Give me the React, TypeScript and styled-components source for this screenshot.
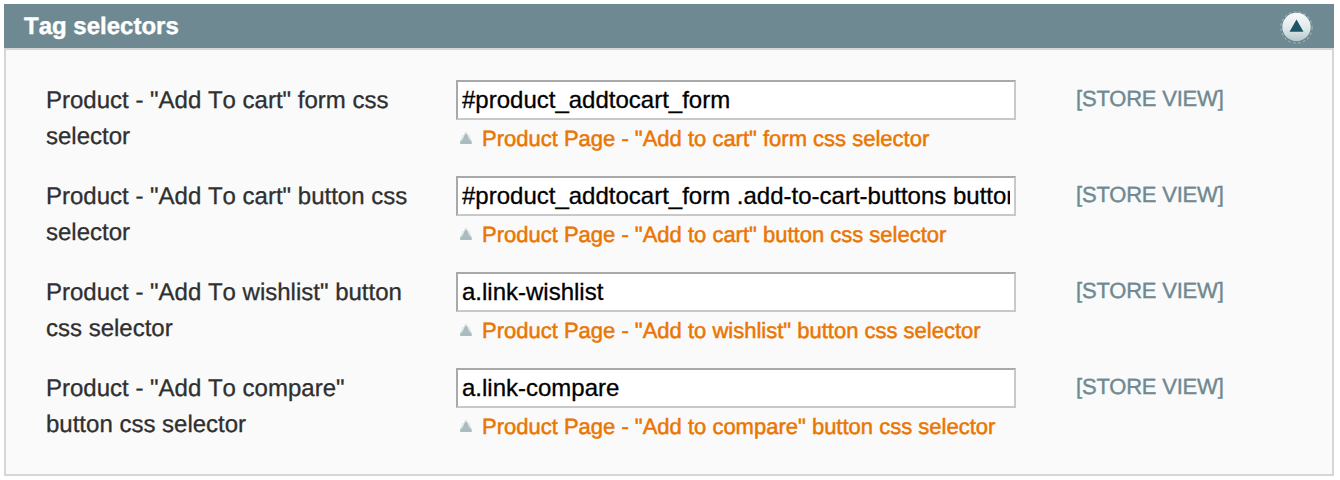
import React from "react";
import styled, { createGlobalStyle } from "styled-components";

const GlobalStyle = createGlobalStyle`
  * { box-sizing: border-box; }
  body {
    margin: 0;
    background: #fff;
    font-family: "Liberation Sans", Arial, sans-serif;
    text-rendering: geometricPrecision;
  }
`;

const Panel = styled.section`
  width: 1330px;
  margin: 4px 0 0 4px;
`;

const PanelHeader = styled.header`
  display: flex;
  align-items: center;
  justify-content: space-between;
  height: 44px;
  padding: 0 20px;
  background: #6f8992;
`;

const PanelTitle = styled.h3`
  margin: 0;
  padding-top: 2px;
  font-size: 24px;
  line-height: 42px;
  font-kerning: none;
  color: #fff;
  -webkit-text-stroke: 0.4px #fff;
`;

const ToggleIcon = styled.svg`
  display: block;
  width: 36px;
  height: 36px;
  margin-top: 2px;
`;

const PanelBody = styled.div`
  height: 428px;
  padding: 30px 40px 0;
  border: 2px solid #d6d6d6;
  background: #fafafa;
`;

const Row = styled.div`
  display: grid;
  grid-template-columns: 370px 560px 1fr;
  column-gap: 40px;
  height: 96px;
`;

const Label = styled.label`
  padding-top: 3px;
  font-size: 24px;
  line-height: 36px;
  font-kerning: none;
  color: #2f2f2f;
  -webkit-text-stroke: 0.3px #2f2f2f;
`;

const TextInput = styled.input`
  display: block;
  width: 560px;
  height: 40px;
  padding: 0 4px;
  border: 2px solid;
  border-color: #a9a9a9 #c8c8c8 #c8c8c8 #a9a9a9;
  border-radius: 0;
  outline: 0;
  background: #fff;
  color: #000;
  font: 24px "Liberation Sans", Arial, sans-serif;
  -webkit-text-stroke: 0.3px #000;
`;

const Hint = styled.p`
  display: flex;
  align-items: center;
  gap: 9px;
  margin: 0;
  padding: 4px 0 0 3px;
  font-size: 22px;
  line-height: 30px;
  white-space: nowrap;
  color: #ea7601;
  -webkit-text-stroke: 0.5px #ea7601;
`;

const HintIcon = styled.svg`
  display: block;
  flex: none;
  width: 14px;
  height: 14px;
  margin-bottom: 2px;
`;

const Scope = styled.span`
  padding: 4px 0 0 10px;
  margin-left: 10px;
  font-size: 22px;
  line-height: 30px;
  letter-spacing: -0.2px;
  white-space: nowrap;
  color: #6f8992;
  -webkit-text-stroke: 0.4px #6f8992;
`;

const fields = [
  {
    id: "cart-form",
    lines: ['Product - "Add To cart" form css', "selector"],
    value: "#product_addtocart_form",
    hint: 'Product Page - "Add to cart" form css selector',
  },
  {
    id: "cart-button",
    lines: ['Product - "Add To cart" button css', "selector"],
    value: "#product_addtocart_form .add-to-cart-buttons button",
    hint: 'Product Page - "Add to cart" button css selector',
  },
  {
    id: "wishlist-button",
    lines: ['Product - "Add To wishlist" button', "css selector"],
    value: "a.link-wishlist",
    hint: 'Product Page - "Add to wishlist" button css selector',
  },
  {
    id: "compare-button",
    lines: ['Product - "Add To compare"', "button css selector"],
    value: "a.link-compare",
    hint: 'Product Page - "Add to compare" button css selector',
  },
];

function CollapseIcon() {
  return (
    <ToggleIcon viewBox="0 0 36 36" aria-hidden="true">
      <defs>
        <linearGradient id="knob" x1="0" y1="0" x2="0" y2="1">
          <stop offset="0" stopColor="#f7fafa" />
          <stop offset="0.55" stopColor="#e0e9ea" />
          <stop offset="1" stopColor="#b4c8cb" />
        </linearGradient>
      </defs>
      <circle cx="18.5" cy="18.5" r="15.6" fill="#66828b" stroke="#93aab0" strokeWidth="1.4" strokeDasharray="3 2" />
      <circle cx="18.5" cy="18" r="14.2" fill="url(#knob)" />
      <path d="M18.5 10.5 25.5 22.8H11.5Z" fill="#1d5468" />
    </ToggleIcon>
  );
}

function HintArrow() {
  return (
    <HintIcon viewBox="0 0 14 14" aria-hidden="true">
      <path d="M5 2h1V1h2v1h1v2h2v3h1v2h1v4H1V9h1V7h1V4h2Z" fill="#dfe7e9" />
      <path d="M6.2 3h1.6L9 5.5l1.2 2.7L12.6 10.5V13H1.2v-2.5L3.8 8.2 5 5.5Z" fill="#a9bcc2" />
    </HintIcon>
  );
}

export default function App() {
  return (
    <>
      <GlobalStyle />
      <Panel>
        <PanelHeader>
          <PanelTitle>Tag selectors</PanelTitle>
          <CollapseIcon />
        </PanelHeader>
        <PanelBody>
          {fields.map((f) => (
            <Row key={f.id}>
              <Label htmlFor={f.id}>
                {f.lines[0]}
                <br />
                {f.lines[1]}
              </Label>
              <div>
                <TextInput id={f.id} defaultValue={f.value} spellCheck={false} />
                <Hint>
                  <HintArrow />
                  <span>{f.hint}</span>
                </Hint>
              </div>
              <Scope>[STORE VIEW]</Scope>
            </Row>
          ))}
        </PanelBody>
      </Panel>
    </>
  );
}
